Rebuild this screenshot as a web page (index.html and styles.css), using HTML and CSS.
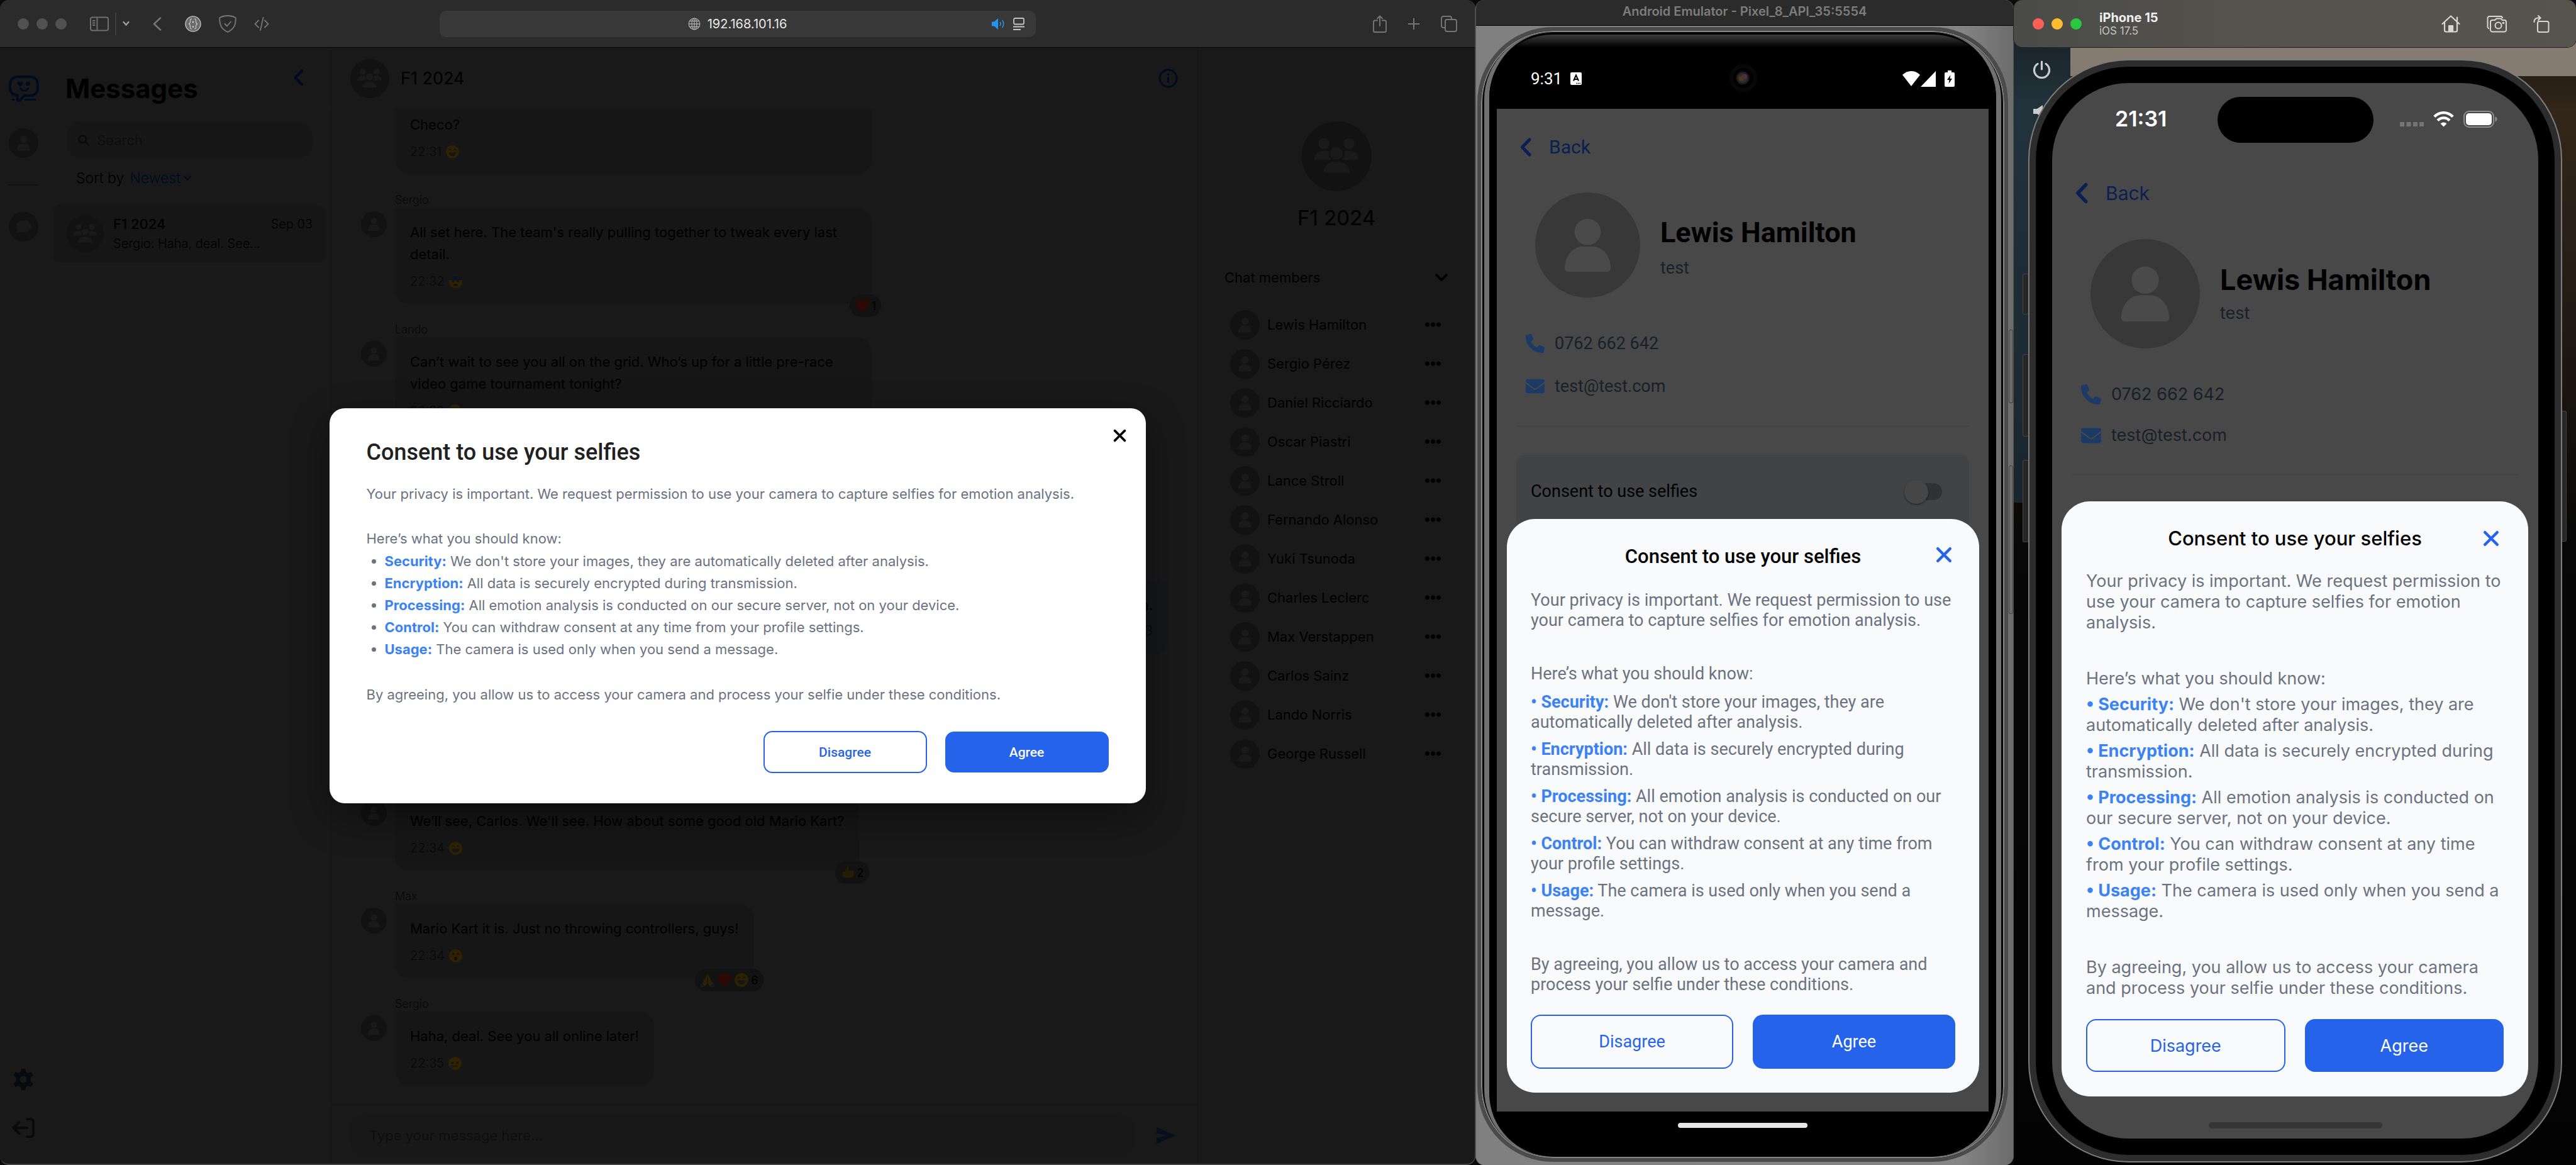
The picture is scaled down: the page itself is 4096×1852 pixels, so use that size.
FILE: index.html
```html
<!DOCTYPE html>
<html lang="en">
<head>
<meta charset="utf-8">
<title>Consent to use your selfies</title>
<link rel="stylesheet" href="styles.css">
</head>
<body>
<svg class="sprite" aria-hidden="true">
  <defs>
    <symbol id="person" viewBox="0 0 48 48"><circle cx="24" cy="18" r="6"/><path d="M13.500 34.500c0-6 4.200-9.800 8-9.800h5c3.800 0 8 3.800 8 9.800 0 1-.6 1.700-1.600 1.700H15.100c-1 0-1.600-.7-1.600-1.700z"/></symbol>
    <symbol id="group" viewBox="0 0 60 60"><circle cx="19" cy="19" r="4.800"/><circle cx="40.500" cy="19" r="4.800"/><circle cx="29.700" cy="27.300" r="5.600"/><path d="M10.700 33c0-4.500 3-7.600 7-7.600h3c1 0 2 .3 2.700.8-1 2.800.1 5.400 1.900 6.900H10.900zM34.200 33.100c1.800-1.500 2.900-4.100 1.900-6.900.7-.5 1.700-.8 2.700-.8h2.900c4 0 7 3.100 7 7.600zM18.700 43.800c0-5.300 3.800-9 8.200-9h5.700c4.400 0 8.200 3.700 8.200 9z"/></symbol>
    <symbol id="chev-left" viewBox="0 0 18 30"><path d="M15 3 3.500 15 15 27" fill="none" stroke="currentColor" stroke-width="5" stroke-linecap="round" stroke-linejoin="round"/></symbol>
    <symbol id="chev-down" viewBox="0 0 20 14"><path d="M3 3.500l7 7 7-7" fill="none" stroke="currentColor" stroke-width="3.200" stroke-linecap="round" stroke-linejoin="round"/></symbol>
    <symbol id="cross" viewBox="0 0 24 24"><path d="M3 3l18 18M21 3L3 21" fill="none" stroke="currentColor" stroke-width="4.200" stroke-linecap="round"/></symbol>
    <symbol id="phone" viewBox="0 0 512 512"><path d="M164.900 24.600c-7.700-18.600-28-28.500-47.400-23.200l-88 24C12.100 30.200 0 46 0 64c0 247.400 200.600 448 448 448 18 0 33.800-12.100 38.600-29.500l24-88c5.300-19.400-4.600-39.700-23.200-47.400l-96-40c-16.300-6.800-35.200-2.100-46.300 11.600L304.700 368C234.300 334.700 177.300 277.700 144 207.300L193.300 167c13.700-11.200 18.400-30 11.600-46.300l-40-96z"/></symbol>
    <symbol id="mail" viewBox="0 64 512 384"><path d="M48 64C21.500 64 0 85.500 0 112c0 15.100 7.100 29.300 19.200 38.400L236.800 313.600c11.400 8.500 27 8.500 38.400 0L492.800 150.400c12.100-9.100 19.200-23.300 19.200-38.400 0-26.500-21.500-48-48-48H48zM0 176V384c0 35.300 28.700 64 64 64H448c35.300 0 64-28.700 64-64V176L294.400 339.200c-22.800 17.100-54 17.100-76.800 0L0 176z"/></symbol>
    <symbol id="smile" viewBox="0 0 24 24"><circle cx="12" cy="12" r="11" fill="#332500"/><path d="M6 12.500h12c0 4-2.500 6.500-6 6.500s-6-2.500-6-6.500z" fill="#161616"/><path d="M6.500 9c.8-2 2.500-2 3.200 0M14.300 9c.8-2 2.500-2 3.200 0" stroke="#130d00" stroke-width="1.500" fill="none"/></symbol>
    <symbol id="worried" viewBox="0 0 24 24"><circle cx="12" cy="12" r="11" fill="#332500"/><path d="M1.500 9.500a11 11 0 0 1 21 0c-5 1.500-16 1.500-21 0z" fill="#0c1428"/><circle cx="8" cy="12" r="1.600" fill="#130d00"/><circle cx="16" cy="12" r="1.600" fill="#130d00"/><path d="M8 19c1-4 7-4 8 0z" fill="#130d00"/></symbol>
    <symbol id="surprised" viewBox="0 0 24 24"><circle cx="12" cy="12" r="11" fill="#332500"/><circle cx="8" cy="9" r="1.700" fill="#130d00"/><circle cx="16" cy="9" r="1.700" fill="#130d00"/><ellipse cx="12" cy="16.500" rx="2.500" ry="3" fill="#130d00"/></symbol>
    <symbol id="sad" viewBox="0 0 24 24"><circle cx="12" cy="12" r="11" fill="#332500"/><circle cx="8" cy="11" r="1.700" fill="#130d00"/><circle cx="16" cy="11" r="1.700" fill="#130d00"/><path d="M8.500 18c1.500-2.500 5.500-2.500 7 0" stroke="#130d00" stroke-width="1.500" fill="none"/><path d="M7 14c2 3 2 6-.5 6.500S3 17 7 14z" fill="#0b2233"/></symbol>
    <symbol id="heart" viewBox="0 0 24 24"><path d="M12 22C4 15.500 1.500 12 1.500 7.800 1.500 4.500 4 2 7 2c2.200 0 4 1.200 5 3.200C13 3.200 14.800 2 17 2c3 0 5.500 2.500 5.500 5.800C22.500 12 20 15.500 12 22z" fill="#330700"/></symbol>
    <symbol id="thumb" viewBox="0 0 24 24"><path d="M4 11h4l3.500-9c2.500 0 3 2.500 1.500 7h7c2 0 2.500 2 1.500 3 .8 1 .6 2.400-.6 3 .4 1.200 0 2.300-1.100 2.800.2 1.200-.6 2.700-2.300 2.700H10l-6-1.500z" fill="#2b1f00"/></symbol>
    <symbol id="pray" viewBox="0 0 24 24"><path d="M11.500 1.500 6.500 13 3 18l5 4 3.500-4zM12.500 1.500l5 11.500 3.500 5-5 4-3.500-4z" fill="#332500"/><path d="M1.500 17.500 7 23H1.500zM22.500 17.500 17 23h5.500z" fill="#08243d"/></symbol>
  </defs>
</svg>

<main class="desktop">

  <section class="safari">
    <header class="toolbar">
      <div class="tools">
        <div class="dots"><i></i><i></i><i></i></div>
        <div class="side-tools">
          <svg width="30" height="24" viewBox="0 0 30 24" fill="none" stroke="#6f6f6f" stroke-width="2"><rect x="1" y="1.500" width="28" height="21" rx="3"/><path d="M11.500 2v20M4 7h4.500M4 10.500h4.500M4 14h4.500"/></svg>
          <span class="rule"></span>
          <svg width="11" height="9" viewBox="0 0 11 9"><path d="M1.500 2l4 4.500 4-4.500" fill="none" stroke="currentColor" stroke-width="2.300" stroke-linecap="round"/></svg>
        </div>
        <svg width="14" height="22" viewBox="0 0 14 22"><path d="M12 1.500 2 11l10 9.500" fill="none" stroke="#757575" stroke-width="2.500" stroke-linecap="round" stroke-linejoin="round"/></svg>
        <div class="ext-tools">
          <svg width="26" height="26" viewBox="0 0 26 26" fill="none"><circle cx="13" cy="13" r="12" fill="#6b6b6b" stroke="#b5b5b5" stroke-width="1.600"/><path d="M11 5c-3 0-2.500 2-2.500 4S8 12.500 6.500 13C8 13.500 8.500 15 8.500 17s-.5 4 2.500 4M15 5c3 0 2.500 2 2.500 4s.5 3.500 2 4c-1.500.5-2 2-2 4s.5 4-2.500 4" stroke="#c8c8c8" stroke-width="1.100"/><circle cx="13" cy="10" r="1.300" fill="#d5d5d5"/><circle cx="13" cy="17.500" r="1.300" fill="#d5d5d5"/></svg>
          <svg width="28" height="28" viewBox="0 0 28 28" fill="none" stroke="#777" stroke-width="1.800" stroke-linejoin="round" stroke-linecap="round"><path d="M14 1c4.500 0 8.500.8 12.800 3.200C27 14 25 22 14 27 3 22 1 14 1.200 4.200 5.500 1.800 9.500 1 14 1z"/><path d="M9.500 14l3.500 3.500 6-7"/></svg>
          <svg width="24" height="22" viewBox="0 0 24 22" fill="none" stroke="#757575" stroke-width="1.800" stroke-linecap="round" stroke-linejoin="round"><path d="M7 5.500 1.500 11 7 16.500M17 5.500l5.500 5.500-5.500 5.500M14.500 1l-4.500 20"/></svg>
        </div>
      </div>
      <div class="address">
        <span></span>
        <span class="url"><svg width="20" height="20" viewBox="0 0 20 20" fill="none" stroke="#a8a8a8" stroke-width="1.300"><circle cx="10" cy="10" r="8.800"/><ellipse cx="10" cy="10" rx="4" ry="8.800"/><path d="M10 1v18M1 10h18M2.500 5.500h15M2.500 14.500h15"/></svg>192.168.101.16</span>
        <span class="page-tools">
          <svg width="22" height="18" viewBox="0 0 22 18"><path d="M0 5.500h4L10 0v18l-6-5.500H0z" fill="#2196f3"/><path d="M13 6c1.500 2 1.500 4 0 6M16.500 3c3 3.500 3 8.500 0 12" fill="none" stroke="#2196f3" stroke-width="1.600"/></svg>
          <svg width="18" height="20" viewBox="0 0 18 20" fill="none" stroke="#c4c4c4" stroke-width="1.800"><rect x="1" y="1" width="16" height="9.500" rx="2"/><path d="M0 14.500h18M0 19h12"/></svg>
        </span>
      </div>
      <div class="win-tools">
        <svg width="22" height="28" viewBox="0 0 22 28" fill="none" stroke="#767676" stroke-width="1.900" stroke-linecap="round" stroke-linejoin="round"><path d="M7 8.500H3a2 2 0 0 0-2 2V25a2 2 0 0 0 2 2h16a2 2 0 0 0 2-2V10.500a2 2 0 0 0-2-2h-4M11 17V1.500M7 5.500l4-4 4 4"/></svg>
        <svg width="20" height="20" viewBox="0 0 20 20"><path d="M10 1v18M1 10h18" stroke="#767676" stroke-width="2"/></svg>
        <svg width="26" height="26" viewBox="0 0 26 26" fill="none" stroke="#767676" stroke-width="1.900"><path d="M7 19H4a3 3 0 0 1-3-3V4a3 3 0 0 1 3-3h10a3 3 0 0 1 3 3v2"/><rect x="7" y="6" width="18" height="19" rx="3"/></svg>
      </div>
    </header>

    <div class="app">
      <nav class="rail">
        <svg class="logo" width="48" height="42" viewBox="0 0 48 42"><path d="M14 2h20c7 0 12 5 12 12v6c0 7-5 12-12 12h-9l-7 7c-2 2-4.500 1-4.500-2v-5.500C7 31.500 2 26 2 20v-6C2 7 7 2 14 2z" fill="none" stroke="currentColor" stroke-width="4"/><path d="M18 17.500c-4-3-4.500-4.500-4.500-5.500 0-2.500 3.500-3 4.500-.8 1-2.200 4.500-1.700 4.500.8 0 1-.5 2.500-4.500 5.500z" fill="currentColor"/><circle cx="30.500" cy="13" r="3.600" fill="currentColor"/><path d="M18.500 20.500c3 5 9 5 12 0M6 38.500h2M26 38.500h16" fill="none" stroke="currentColor" stroke-width="3" stroke-linecap="round"/></svg>
        <span class="avatar"><svg><use href="#person"/></svg></span>
        <hr>
        <span class="avatar"><svg viewBox="0 0 48 48"><path d="M24 13.500c6.600 0 12 4.300 12 9.700s-5.400 9.800-12 9.800c-2 0-3.800-.4-5.500-1.100-1.800 1.300-3.900 2-6 2.100 1-1.200 1.700-2.700 1.900-4.200-1.500-1.800-2.400-4-2.400-6.600 0-5.400 5.400-9.700 12-9.700z"/></svg></span>
        <div class="rail-end">
          <svg width="36" height="36" viewBox="0 0 36 36"><path fill-rule="evenodd" d="M15 1h6l1 5 3.500 2 5-1.700 3 5.200-4 3.500v6l4 3.500-3 5.200-5-1.700-3.500 2-1 5h-6l-1-5-3.500-2-5 1.700-3-5.200 4-3.500v-6l-4-3.500 3-5.200 5 1.700L14 6zM18 12.500a5.500 5.500 0 1 0 0 11 5.500 5.500 0 0 0 0-11z" fill="#070a0e"/></svg>
          <svg width="36" height="32" viewBox="0 0 36 32" fill="none" stroke="#080a0c" stroke-width="4" stroke-linecap="round" stroke-linejoin="round"><path d="M24 16H3M11.500 7 2.500 16l9 9M24 2h6a4 4 0 0 1 4 4v20a4 4 0 0 1-4 4h-6"/></svg>
        </div>
      </nav>

      <aside class="inbox">
        <div class="inbox-head">
          <h1>Messages</h1>
          <button class="bare navy" aria-label="Collapse"><svg width="17" height="27"><use href="#chev-left"/></svg></button>
        </div>
        <label class="search">
          <svg width="18" height="18" viewBox="0 0 18 18" fill="none" stroke="#0a0a0a" stroke-width="2.600" stroke-linecap="round"><circle cx="7.300" cy="7.300" r="5.800"/><path d="M12 12l4.500 4.500"/></svg>
          <input type="text" placeholder="Search" aria-label="Search">
        </label>
        <div class="sort">Sort by <button class="bare navy">Newest<svg width="14" height="10"><use href="#chev-down"/></svg></button></div>
        <a class="thread" href="#chat">
          <span class="avatar"><svg><use href="#group"/></svg></span>
          <span class="thread-text">
            <span class="thread-top"><b>F1 2024</b><time>Sep 03</time></span>
            <span class="preview">Sergio: Haha, deal. See...</span>
          </span>
        </a>
      </aside>

      <section class="chat" id="chat">
        <header class="chat-head">
          <span class="avatar"><svg><use href="#group"/></svg></span>
          <h2>F1 2024</h2>
          <button class="bare navy" aria-label="Chat details"><svg width="31" height="31" viewBox="0 0 31 31"><circle cx="15.500" cy="15.500" r="13.500" fill="none" stroke="currentColor" stroke-width="3"/><circle cx="15.500" cy="9.300" r="1.800" fill="currentColor"/><path d="M15.500 13.500v9" stroke="currentColor" stroke-width="3"/></svg></button>
        </header>
        <div class="log">
          <article class="msg cut"><div class="bubble full"><p>Checo?</p><span class="stamp">22:31 <svg><use href="#smile"/></svg></span></div></article>
          <article class="msg"><span class="who">Sergio</span><span class="avatar"><svg><use href="#person"/></svg></span><div class="bubble full"><p>All set here. The team's really pulling together to tweak every last detail.</p><span class="stamp">22:32 <svg><use href="#worried"/></svg></span><span class="react"><svg><use href="#heart"/></svg>1</span></div></article>
          <article class="msg"><span class="who">Lando</span><span class="avatar"><svg><use href="#person"/></svg></span><div class="bubble full"><p>Can’t wait to see you all on the grid. Who’s up for a little pre-race video game tournament tonight?</p><span class="stamp">22:33 <svg><use href="#smile"/></svg></span></div></article>
          <article class="mine"><p>n.</p><span>3</span></article>
          <article class="msg resume"><span class="avatar"><svg><use href="#person"/></svg></span><div class="bubble"><p>We’ll see, Carlos. We'll see. How about some good old Mario Kart?</p><span class="stamp">22:34 <svg><use href="#smile"/></svg></span><span class="react"><svg><use href="#thumb"/></svg>2</span></div></article>
          <article class="msg"><span class="who">Max</span><span class="avatar"><svg><use href="#person"/></svg></span><div class="bubble"><p>Mario Kart it is. Just no throwing controllers, guys!</p><span class="stamp">22:34 <svg><use href="#surprised"/></svg></span><span class="react"><svg><use href="#pray"/></svg><svg><use href="#heart"/></svg><svg><use href="#smile"/></svg>6</span></div></article>
          <article class="msg"><span class="who">Sergio</span><span class="avatar"><svg><use href="#person"/></svg></span><div class="bubble"><p>Haha, deal. See you all online later!</p><span class="stamp">22:35 <svg><use href="#sad"/></svg></span></div></article>
        </div>
        <footer class="compose">
          <input type="text" placeholder="Type your message here..." aria-label="Message">
          <button class="bare" aria-label="Send"><svg width="30" height="26" viewBox="0 0 30 26"><path d="M0 0l30 13L0 26v-9.500L17 13 0 9.500z" fill="#06101d"/></svg></button>
        </footer>
      </section>

      <aside class="members">
        <span class="avatar"><svg><use href="#group"/></svg></span>
        <h2>F1 2024</h2>
        <div class="members-head">Chat members<svg width="24" height="16"><use href="#chev-down"/></svg></div>
        <ul>
          <li><span class="avatar"><svg><use href="#person"/></svg></span>Lewis Hamilton<i></i></li>
          <li><span class="avatar"><svg><use href="#person"/></svg></span>Sergio Pérez<i></i></li>
          <li><span class="avatar"><svg><use href="#person"/></svg></span>Daniel Ricciardo<i></i></li>
          <li><span class="avatar"><svg><use href="#person"/></svg></span>Oscar Piastri<i></i></li>
          <li><span class="avatar"><svg><use href="#person"/></svg></span>Lance Stroll<i></i></li>
          <li><span class="avatar"><svg><use href="#person"/></svg></span>Fernando Alonso<i></i></li>
          <li><span class="avatar"><svg><use href="#person"/></svg></span>Yuki Tsunoda<i></i></li>
          <li><span class="avatar"><svg><use href="#person"/></svg></span>Charles Leclerc<i></i></li>
          <li><span class="avatar"><svg><use href="#person"/></svg></span>Max Verstappen<i></i></li>
          <li><span class="avatar"><svg><use href="#person"/></svg></span>Carlos Sainz<i></i></li>
          <li><span class="avatar"><svg><use href="#person"/></svg></span>Lando Norris<i></i></li>
          <li><span class="avatar"><svg><use href="#person"/></svg></span>George Russell<i></i></li>
        </ul>
      </aside>

      <div class="overlay">
        <div class="dialog" role="dialog" aria-labelledby="dialog-title">
          <button class="bare dialog-close" aria-label="Close"><svg width="21" height="21"><use href="#cross"/></svg></button>
          <h2 id="dialog-title">Consent to use your selfies</h2>
          <p>Your privacy is important. We request permission to use your camera to capture selfies for emotion analysis.</p>
          <p class="know">Here’s what you should know:</p>
          <ul>
            <li><b>Security:</b> We don't store your images, they are automatically deleted after analysis.</li>
            <li><b>Encryption:</b> All data is securely encrypted during transmission.</li>
            <li><b>Processing:</b> All emotion analysis is conducted on our secure server, not on your device.</li>
            <li><b>Control:</b> You can withdraw consent at any time from your profile settings.</li>
            <li><b>Usage:</b> The camera is used only when you send a message.</li>
          </ul>
          <p>By agreeing, you allow us to access your camera and process your selfie under these conditions.</p>
          <div class="actions"><button class="outline">Disagree</button><button class="solid">Agree</button></div>
        </div>
      </div>
    </div>
  </section>

  <section class="emulator">
    <header class="emu-bar">Android Emulator - Pixel_8_API_35:5554</header>
    <div class="stage">
      <i class="key power"></i><i class="key volume"></i>
      <div class="pixel"><div class="pixel-rim"><div class="pixel-face">
        <div class="a-status">
          <span class="a-left">9:31 <svg width="18" height="20" viewBox="0 0 18 20"><rect width="18" height="20" rx="2" fill="#fff"/><path d="M5 13.500 9 4.500l4 9M6.500 11h5" fill="none" stroke="#000" stroke-width="2"/><path d="M9.500 17.500h7" stroke="#000" stroke-width="1.500" stroke-dasharray="1.500 1"/></svg></span>
          <svg class="lens" width="46" height="46" viewBox="0 0 46 46"><circle cx="23" cy="23" r="22" fill="#080808"/><circle cx="23" cy="23" r="16" fill="#020202"/><circle cx="22" cy="23" r="10.500" fill="#1b1b1b"/><circle cx="22" cy="23" r="8" fill="#2f2a2b"/><circle cx="20" cy="24" r="4" fill="#4a3a16"/><circle cx="25" cy="21" r="4" fill="#4d3040"/></svg>
          <span class="a-right">
            <svg width="54" height="25" viewBox="0 0 54 25"><path d="M0 6C8-2 20-2 28 6L14 24z" fill="#fff"/><path d="M53 0v25H29z" fill="#fff"/></svg>
            <svg width="16" height="26" viewBox="0 0 16 26"><path d="M5 0h6v3h3a2 2 0 0 1 2 2v19a2 2 0 0 1-2 2H2a2 2 0 0 1-2-2V5a2 2 0 0 1 2-2h3z" fill="#fff"/><path d="M9.500 7 4 15h3.500L6.500 21 12 13H8.500z" fill="#000"/></svg>
          </span>
        </div>
        <div class="screen android">
          <a class="back" href="#back"><svg width="18" height="32"><use href="#chev-left"/></svg>Back</a>
          <div class="profile">
            <span class="photo"><svg><use href="#person"/></svg></span>
            <div><h2>Lewis Hamilton</h2><p>test</p></div>
          </div>
          <ul class="contact">
            <li><svg width="30" height="30"><use href="#phone"/></svg>0762 662 642</li>
            <li><svg width="30" height="24"><use href="#mail"/></svg>test@test.com</li>
          </ul>
          <hr>
          <label class="consent">Consent to use selfies<input type="checkbox" role="switch"></label>
          <div class="sheet" role="dialog" aria-labelledby="a-title">
            <button class="bare sheet-close" aria-label="Close"><svg><use href="#cross"/></svg></button>
            <h2 id="a-title">Consent to use your selfies</h2>
            <p>Your privacy is important. We request permission to use your camera to capture selfies for emotion analysis.</p>
            <p class="know">Here’s what you should know:</p>
            <ul>
              <li><b>• Security:</b> We don't store your images, they are automatically deleted after analysis.</li>
              <li><b>• Encryption:</b> All data is securely encrypted during transmission.</li>
              <li><b>• Processing:</b> All emotion analysis is conducted on our secure server, not on your device.</li>
              <li><b>• Control:</b> You can withdraw consent at any time from your profile settings.</li>
              <li><b>• Usage:</b> The camera is used only when you send a message.</li>
            </ul>
            <p class="know">By agreeing, you allow us to access your camera and process your selfie under these conditions.</p>
            <div class="actions"><button class="outline">Disagree</button><button class="solid">Agree</button></div>
          </div>
        </div>
        <div class="a-nav"><i></i></div>
      </div></div></div>
    </div>
  </section>

  <section class="simulator">
    <header class="sim-bar">
      <div class="dots lights"><i></i><i></i><i></i></div>
      <div class="sim-name"><strong>iPhone 15</strong><span>iOS 17.5</span></div>
      <div class="sim-tools">
        <svg width="30" height="28" viewBox="0 0 30 28" fill="none" stroke="#d8d7d5" stroke-width="2.200" stroke-linejoin="round" stroke-linecap="round"><path d="M1.500 14 15 1.500 28.500 14M5 11v13a2.500 2.500 0 0 0 2.500 2.500h15A2.500 2.500 0 0 0 25 24V11M25 9V3.500"/><path d="M12 26v-9h6v9z" fill="#d8d7d5"/></svg>
        <svg width="32" height="28" viewBox="0 0 32 28" fill="none" stroke="#d8d7d5" stroke-width="2" stroke-linejoin="round"><path d="M4 21.500A3 3 0 0 1 1.500 18V5A3 3 0 0 1 4.500 2H22a3 3 0 0 1 3 3"/><path d="M9 8h4l2.500-2.500h7L25 8h3a3 3 0 0 1 3 3v12.500a3 3 0 0 1-3 3H9a3 3 0 0 1-3-3V11a3 3 0 0 1 3-3z"/><circle cx="18.500" cy="16.500" r="5"/><circle cx="26.500" cy="12.500" r=".8"/></svg>
        <svg width="26" height="28" viewBox="0 0 26 28" fill="none" stroke="#d8d7d5" stroke-width="2" stroke-linejoin="round" stroke-linecap="round"><rect x="7" y="10" width="17.500" height="17" rx="2.500"/><path d="M1.500 11c0-4.500 2-6.500 6.500-6.500h3M8 1l3.500 3.500L8 8"/></svg>
      </div>
    </header>
    <div class="wallpaper">
      <div class="emu-panel">
        <svg width="29" height="29" viewBox="0 0 29 29" fill="none" stroke="#c9cccd" stroke-width="3.200" stroke-linecap="round"><path d="M8 5.500a12 12 0 1 0 13 0M14.500 2v12"/></svg>
        <svg width="20" height="20" viewBox="0 0 20 20"><path d="M1 6h6l9-6v20l-9-6H1z" fill="#c9cccd"/></svg>
      </div>
      <i class="key mute"></i><i class="key up"></i><i class="key down"></i><i class="key side"></i>
      <div class="iphone"><div class="iphone-face">
        <div class="screen ios">
          <div class="i-status">
            <span>21:31</span>
            <i class="island"></i>
            <span class="i-right">
              <svg width="38" height="8" viewBox="0 0 38 8"><path d="M0 0h7v7H0zM10.500 0h7v7h-7zM21 0h7v7h-7zM31 0h7v7h-7z" fill="#757575"/></svg>
              <svg width="33" height="26" viewBox="0 0 33 26" fill="none" stroke="#fff" stroke-width="4.400"><path d="M1.800 9.500c8.500-8.500 21-8.500 29.400 0M7 15.500c5.500-5.500 13.500-5.500 19 0"/><path d="M11.500 20.500c3-2.700 7-2.700 10 0l-5 5z" fill="#fff" stroke="none"/></svg>
              <svg width="54" height="27" viewBox="0 0 54 27"><rect x="1" y="1" width="47" height="25" rx="8" fill="none" stroke="#8e8e8e" stroke-width="2"/><rect x="4" y="4" width="41" height="19" rx="5" fill="#fff"/><path d="M50.500 9.500c4 1 4 7 0 8z" fill="#8e8e8e"/></svg>
            </span>
          </div>
          <a class="back" href="#back"><svg width="20" height="34"><use href="#chev-left"/></svg>Back</a>
          <div class="profile">
            <span class="photo"><svg><use href="#person"/></svg></span>
            <div><h2>Lewis Hamilton</h2><p>test</p></div>
          </div>
          <ul class="contact">
            <li><svg width="32" height="32"><use href="#phone"/></svg>0762 662 642</li>
            <li><svg width="32" height="25"><use href="#mail"/></svg>test@test.com</li>
          </ul>
          <hr>
          <div class="sheet" role="dialog" aria-labelledby="i-title">
            <button class="bare sheet-close" aria-label="Close"><svg><use href="#cross"/></svg></button>
            <h2 id="i-title">Consent to use your selfies</h2>
            <p>Your privacy is important. We request permission to use your camera to capture selfies for emotion analysis.</p>
            <p class="know">Here’s what you should know:</p>
            <ul>
              <li><b>• Security:</b> We don't store your images, they are automatically deleted after analysis.</li>
              <li><b>• Encryption:</b> All data is securely encrypted during transmission.</li>
              <li><b>• Processing:</b> All emotion analysis is conducted on our secure server, not on your device.</li>
              <li><b>• Control:</b> You can withdraw consent at any time from your profile settings.</li>
              <li><b>• Usage:</b> The camera is used only when you send a message.</li>
            </ul>
            <p class="know">By agreeing, you allow us to access your camera and process your selfie under these conditions.</p>
            <div class="actions"><button class="outline">Disagree</button><button class="solid">Agree</button></div>
          </div>
          <i class="home-bar"></i>
        </div>
      </div></div>
    </div>
  </section>
</main>
</body>
</html>
```
FILE: styles.css
```css
*, *::before, *::after { box-sizing: border-box; }

body {
  margin: 0;
  background: #0b0b0b;
  font-family: Inter, "Liberation Sans", sans-serif;
  font-size: 22px;
}

h1, h2, p, ul { margin: 0; padding: 0; }
ul { list-style: none; }
button, input { font: inherit; }
svg { display: block; flex: none; }
a { color: inherit; text-decoration: none; }
.sprite { position: absolute; width: 0; height: 0; }
.bare { padding: 0; border: 0; background: none; color: inherit; cursor: pointer; }
.navy { color: #000b1f; }

.desktop {
  display: grid;
  grid-template-columns: 2346fr 856fr 894fr;
  min-height: 100vh;
}
.safari, .emulator, .simulator { display: flex; flex-direction: column; min-width: 0; }

/* shared pieces */
.dots { display: flex; gap: 12px; }
.dots i { width: 18px; height: 18px; border-radius: 50%; background: #515151; }
.avatar {
  display: block;
  flex: none;
  width: 47px;
  height: 47px;
  border-radius: 50%;
  background: #121212;
  color: #1a1a1a;
}
.avatar svg { width: 100%; height: 100%; fill: currentColor; }
.actions { display: flex; align-items: center; }
.outline, .solid { border: 2px solid #2563eb; border-radius: 14px; }
.outline { background: transparent; color: #2563eb; }
.solid { background: #2563eb; color: #fff; }

/* browser window */
.safari {
  overflow: hidden;
  border-right: 1px solid #4a4a4a;
  border-bottom: 2px solid #434343;
  border-radius: 14px;
  background: #191919;
  color: #000;
}
.toolbar {
  display: grid;
  grid-template-columns: 1fr 948px 1fr;
  align-items: center;
  height: 76px;
  border-bottom: 1px solid #000;
  background: #2b2b2b;
}
.tools { display: flex; align-items: center; padding-left: 28px; gap: 37px; }
.side-tools { display: flex; align-items: center; gap: 10px; color: #a0a0a0; }
.rule { width: 2px; height: 36px; background: #3f3f3f; }
.ext-tools { display: flex; align-items: center; gap: 28px; }
.address {
  display: grid;
  grid-template-columns: 1fr auto 1fr;
  align-items: center;
  height: 42px;
  border-radius: 10px;
  background: #383838;
  color: #e8e8e8;
  font-size: 20px;
}
.url { display: flex; align-items: center; gap: 11px; }
.page-tools { display: flex; align-items: center; justify-content: flex-end; gap: 12px; padding-right: 18px; }
.win-tools { display: flex; align-items: center; justify-content: flex-end; gap: 33px; padding-right: 28px; }

.app {
  position: relative;
  display: grid;
  flex: 1;
  grid-template-columns: 76px 451px minmax(0, 1fr) 441px;
}
.rail { display: flex; flex-direction: column; gap: 42px; padding: 44px 14px 41px; }
.rail hr { width: 48px; height: 2px; margin: 0; border: 0; background: #111; }
.logo { color: #000b1f; }
.rail-end { display: flex; flex-direction: column; gap: 43px; margin-top: auto; padding-left: 5px; }

.inbox { border-right: 1px solid #161616; }
.inbox-head { display: flex; align-items: flex-start; justify-content: space-between; padding: 34px 43px 0 28px; }
.inbox h1 { font-size: 42px; line-height: 62px; }
.search {
  display: flex;
  align-items: center;
  gap: 12px;
  height: 59px;
  margin: 21px 29px 0 30px;
  padding: 0 18px;
  border-radius: 24px;
  background: #171717;
}
.search input { flex: 1; min-width: 0; padding: 0; border: 0; background: none; outline: none; }
::placeholder { color: #0e0e0e; opacity: 1; }
.sort { display: flex; align-items: center; gap: 9px; padding: 16px 45px 0; font-size: 23px; font-weight: 300; line-height: 30px; }
.sort button { display: flex; align-items: center; gap: 4px; }
.thread {
  display: flex;
  align-items: center;
  gap: 15px;
  height: 91px;
  margin: 28px 9px 0 10px;
  padding: 0 20px;
  border-radius: 10px;
  background: #161616;
}
.thread .avatar { width: 59px; height: 59px; }
.thread-text { flex: 1; line-height: 30px; }
.thread-text b { font-weight: 500; }
.thread-top { display: flex; justify-content: space-between; }
.thread time, .preview { font-size: 20px; font-weight: 300; }

.chat { display: flex; flex-direction: column; }
.chat-head { display: flex; align-items: center; gap: 18px; height: 98px; padding: 0 31px 0 30px; border-bottom: 1px solid #161616; }
.chat-head .avatar { width: 62px; height: 62px; }
.chat-head h2 { flex: 1; font-size: 27px; font-weight: 400; line-height: 34px; }
.log { display: flex; flex: 1; flex-direction: column; gap: 29px; padding: 0 47px 30px; }
.msg { display: grid; grid-template-columns: 41px minmax(0, 758px); column-gap: 13px; }
.msg .avatar { width: 41px; height: 41px; margin-top: 6px; }
.who { grid-column: 2; color: #080808; font-size: 18px; font-weight: 300; line-height: 24px; }
.bubble {
  position: relative;
  grid-column: 2;
  justify-self: start;
  padding: 22px 24px 21px;
  border-radius: 0 24px 24px 24px;
  background: #161616;
  line-height: 35px;
}
.bubble.full { justify-self: stretch; }
.cut .bubble { padding-top: 7px; border-radius: 0 0 24px 24px; }
.stamp { display: flex; align-items: center; gap: 6px; margin-top: 10px; color: #080808; font-size: 20px; font-weight: 300; line-height: 30px; }
.stamp svg { width: 23px; height: 23px; opacity: .8; }
.react {
  position: absolute;
  right: -15px;
  bottom: -21px;
  display: flex;
  align-items: center;
  gap: 3px;
  height: 36px;
  padding: 0 8px;
  border-radius: 18px;
  background: #121212;
  font-size: 18px;
}
.react svg { width: 24px; height: 24px; opacity: .8; }
.mine {
  align-self: flex-end;
  margin-top: 206px;
  padding: 21px 24px 21px 100px;
  border-radius: 24px 0 24px 24px;
  background: #15171a;
  line-height: 35px;
}
.mine span { display: block; margin-top: 5px; color: #080808; font-weight: 300; text-align: right; }
.resume { margin-top: auto; }
.compose { display: flex; align-items: center; gap: 36px; height: 94px; padding: 3px 35px 0 31px; border-top: 1px solid #161616; }
.compose input { flex: 1; height: 70px; padding: 0 29px; border: 0; border-radius: 24px; background: #181818; outline: none; }

.members { display: flex; flex-direction: column; padding-top: 117px; border-left: 1px solid #161616; }
.members > .avatar { align-self: center; width: 111px; height: 111px; }
.members h2 { margin-top: 22px; font-size: 33px; font-weight: 400; line-height: 40px; text-align: center; }
.members-head { display: flex; align-items: center; justify-content: space-between; margin-top: 60px; padding: 0 41px 0 42px; line-height: 30px; }
.members ul { margin-top: 29px; }
.members li { display: flex; align-items: center; gap: 12px; height: 62px; padding: 0 52px 0 51px; }
.members li i { width: 28px; height: 8px; margin-left: auto; background: radial-gradient(circle, #000 3px, transparent 4px) 0 0 / 9px 8px repeat-x; }

.overlay { position: absolute; inset: 0; display: flex; align-items: center; justify-content: center; }
.dialog {
  position: relative;
  width: 1298px;
  padding: 46px 59px 48px;
  border-radius: 24px;
  background: #fff;
  box-shadow: 0 22px 60px rgba(0, 0, 0, .4);
  color: #6b7280;
  line-height: 35px;
}
.dialog h2 { margin-bottom: 25px; color: #212121; font: 500 36px/48px Roboto, sans-serif; }
.dialog .know { margin-top: 36px; }
.dialog ul { margin: 1px 0 37px; padding-left: 29px; list-style: disc; }
.dialog b, .sheet b { color: #3b82f6; font-weight: 700; }
.dialog .actions { gap: 29px; justify-content: flex-end; margin-top: 40px; }
.dialog .outline, .dialog .solid { width: 260px; height: 67px; font: 500 21px Roboto, sans-serif; }
.dialog .solid { height: 65px; }
.dialog-close { position: absolute; top: 33px; right: 31px; color: #000; }

/* phone app, shared by both devices */
.screen { position: relative; flex: 1; background: #484848; color: #1b1f27; font-size: 27px; }
.back { display: flex; align-items: center; gap: 28px; padding-left: 37px; color: #0a1f52; font-size: 30px; line-height: 36px; }
.profile { display: flex; align-items: center; gap: 32px; padding-left: 61px; }
.photo { flex: none; border-radius: 50%; background: #383838; color: #4a4a4a; }
.photo svg { width: 100%; height: 100%; fill: currentColor; }
.profile h2 { color: #000; font-size: 45px; }
.profile p { line-height: 36px; }
.contact { display: flex; flex-direction: column; margin-top: 57px; padding-left: 46px; line-height: 32px; }
.contact li { display: flex; align-items: center; gap: 16px; }
.contact svg { fill: #1c3a66; }
.screen hr { height: 2px; margin: 46px 31px 0; border: 0; background: #444; }
.sheet { position: absolute; border-radius: 45px; background: #f9fafc; color: #6b7280; }
.sheet h2 { color: #000; font-size: 31px; font-weight: 500; line-height: 40px; text-align: center; }
.sheet ul { display: flex; flex-direction: column; }
.sheet .actions { gap: 31px; }
.sheet .outline, .sheet .solid { flex: 1; border-radius: 16px; }
.sheet-close { position: absolute; color: #2563eb; }
.sheet-close svg { width: 26px; height: 26px; }
.key { position: absolute; border-radius: 3px; background: #262626; box-shadow: inset 0 0 0 1px #444; }

/* Android emulator window */
.emulator { overflow: hidden; border-left: 1px solid #555; border-right: 1px solid #555; border-radius: 14px; background: #858585; }
.emu-bar { height: 41px; border-bottom: 1px solid #000; background: #2b2b2b; color: #7d7d7d; font-size: 20px; font-weight: 600; line-height: 37px; text-align: center; }
.stage { position: relative; display: flex; flex: 1; padding: 2px 8px 5px 2px; background: linear-gradient(90deg, #808080, #858585 90%, #6c6c6c); }
.stage .key { right: 0; width: 7px; background: #6a6a6a; }
.power { top: 483px; height: 117px; }
.volume { top: 699px; height: 236px; }
.pixel { display: flex; flex: 1; padding: 3px; border: 6px solid #4b4b4b; border-radius: 120px; background: #050505; box-shadow: inset 0 0 0 2px #858585; }
.pixel-rim { display: flex; flex: 1; margin: 0 2px; padding-top: 3px; border: 0 solid #707070; border-width: 0 8px; border-radius: 106px; background: #000; }
.pixel-face { display: flex; flex: 1; flex-direction: column; padding: 0 12px; border-radius: 100px; background: linear-gradient(#3c3c3c, #000 20px); }
.a-status {
  position: relative;
  display: flex;
  align-items: center;
  justify-content: space-between;
  height: 118px;
  padding: 22px 54px 0;
  color: #fff;
  font: 26px Roboto, sans-serif;
}
.a-left, .a-right { display: flex; align-items: center; gap: 13px; }
.lens { position: absolute; top: 46px; left: 50%; margin-left: -22px; }
.a-nav { display: flex; justify-content: center; height: 71px; padding-top: 18px; }
.a-nav i { width: 206px; height: 8px; border-radius: 4px; background: #e6e6e6; }

.android { padding-top: 43px; font-family: Roboto, sans-serif; }
.android .profile { margin-top: 54px; }
.android .photo { width: 167px; height: 167px; }
.android .profile h2 { margin: 4px 0 8px; line-height: 60px; }
.android .contact { gap: 36px; }
.consent {
  display: flex;
  align-items: center;
  justify-content: space-between;
  height: 116px;
  margin: 45px 31px 0;
  padding: 0 43px 0 23px;
  border-radius: 14px;
  background: #424345;
  color: #000;
}
.consent input {
  appearance: none;
  position: relative;
  width: 54px;
  height: 27px;
  margin: 0;
  border-radius: 14px;
  background: #303132;
}
.consent input::before {
  content: "";
  position: absolute;
  top: -5px;
  left: -6px;
  width: 38px;
  height: 38px;
  border-radius: 50%;
  background: #464646;
  box-shadow: 0 2px 3px rgba(0, 0, 0, .4);
}
.android .sheet { right: 15px; bottom: 30px; left: 16px; padding: 40px 38px 38px; line-height: 32px; }
.android .sheet h2 { margin-bottom: 33px; }
.android .sheet .know { margin-top: 53px; }
.android .sheet ul { gap: 11px; margin-top: 13px; }
.android .sheet .actions { margin-top: 32px; }
.android .actions button { height: 86px; }
.android .sheet-close { top: 44px; right: 43px; }

/* iPhone simulator window */
.sim-bar { position: relative; z-index: 1; display: flex; align-items: center; height: 75px; padding: 0 42px 0 30px; border-radius: 14px; background: linear-gradient(90deg, #4a4b48, #54524d 40%, #55544d); box-shadow: 0 0 0 1px #222; }
.lights i:nth-child(1) { background: #ff5f57; }
.lights i:nth-child(2) { background: #febc2e; }
.lights i:nth-child(3) { background: #28c840; }
.sim-name { display: flex; flex-direction: column; margin-left: 28px; color: #f0f0f0; font-size: 20px; line-height: 22px; }
.sim-name span { color: #c6c5c3; font-size: 17px; line-height: 20px; }
.sim-tools { display: flex; align-items: center; gap: 42px; margin-left: auto; }
.wallpaper {
  position: relative;
  display: flex;
  flex: 1;
  margin-top: -14px;
  padding: 33px 22px 4px 23px;
  background:
    linear-gradient(150deg, #857b70 0 780px, transparent 790px) 0 0 / 100% 60px no-repeat,
    linear-gradient(#1e1812 0, #33261a 120px, #241c15 400px, #070707 800px, #030303);
}
.emu-panel { position: absolute; top: 0; left: 0; display: flex; flex-direction: column; gap: 42px; width: 90px; height: 738px; padding: 35px 30px; background: linear-gradient(#1a242a, #22323b 15%, #1a262d); }
.mute { top: 374px; left: 14px; width: 10px; height: 65px; }
.up { top: 502px; left: 14px; width: 10px; height: 131px; }
.down { top: 670px; left: 14px; width: 10px; height: 131px; }
.side { top: 592px; right: 15px; width: 10px; height: 208px; }
.iphone { position: relative; display: flex; flex: 1; padding: 10px; border: 2px solid #7d7d7d; border-radius: 160px; background: #2d2d2d; }
.iphone-face { display: flex; flex: 1; padding: 26px; border-radius: 148px; background: #000; }
.ios { border-radius: 122px; }
.i-status { display: flex; align-items: flex-start; justify-content: space-between; height: 157px; padding: 37px 65px 0 100px; color: #fff; font-size: 34px; font-weight: 600; line-height: 40px; }
.island { position: absolute; top: 22px; left: 50%; width: 248px; height: 73px; margin-left: -124px; border-radius: 37px; background: #000; }
.i-right { display: flex; align-items: center; gap: 15px; height: 40px; }
.i-right svg:first-child { margin-top: 18px; }
.ios .profile { margin-top: 55px; }
.ios .photo { width: 174px; height: 174px; }
.ios .profile h2 { margin-bottom: 8px; line-height: 54px; }
.ios .contact { gap: 33px; }
.ios .sheet { right: 16px; bottom: 67px; left: 15px; padding: 39px 39px 39px; line-height: 33px; }
.ios .sheet h2 { margin-bottom: 31px; }
.ios .sheet .know { margin-top: 56px; }
.ios .sheet ul { gap: 8px; margin-top: 8px; }
.ios .sheet .actions { margin-top: 33px; }
.ios .actions button { height: 84px; }
.ios .sheet-close { top: 46px; right: 46px; }
.home-bar { position: absolute; bottom: 16px; left: 50%; width: 276px; height: 10px; margin-left: -138px; border-radius: 5px; background: #363636; }
```
